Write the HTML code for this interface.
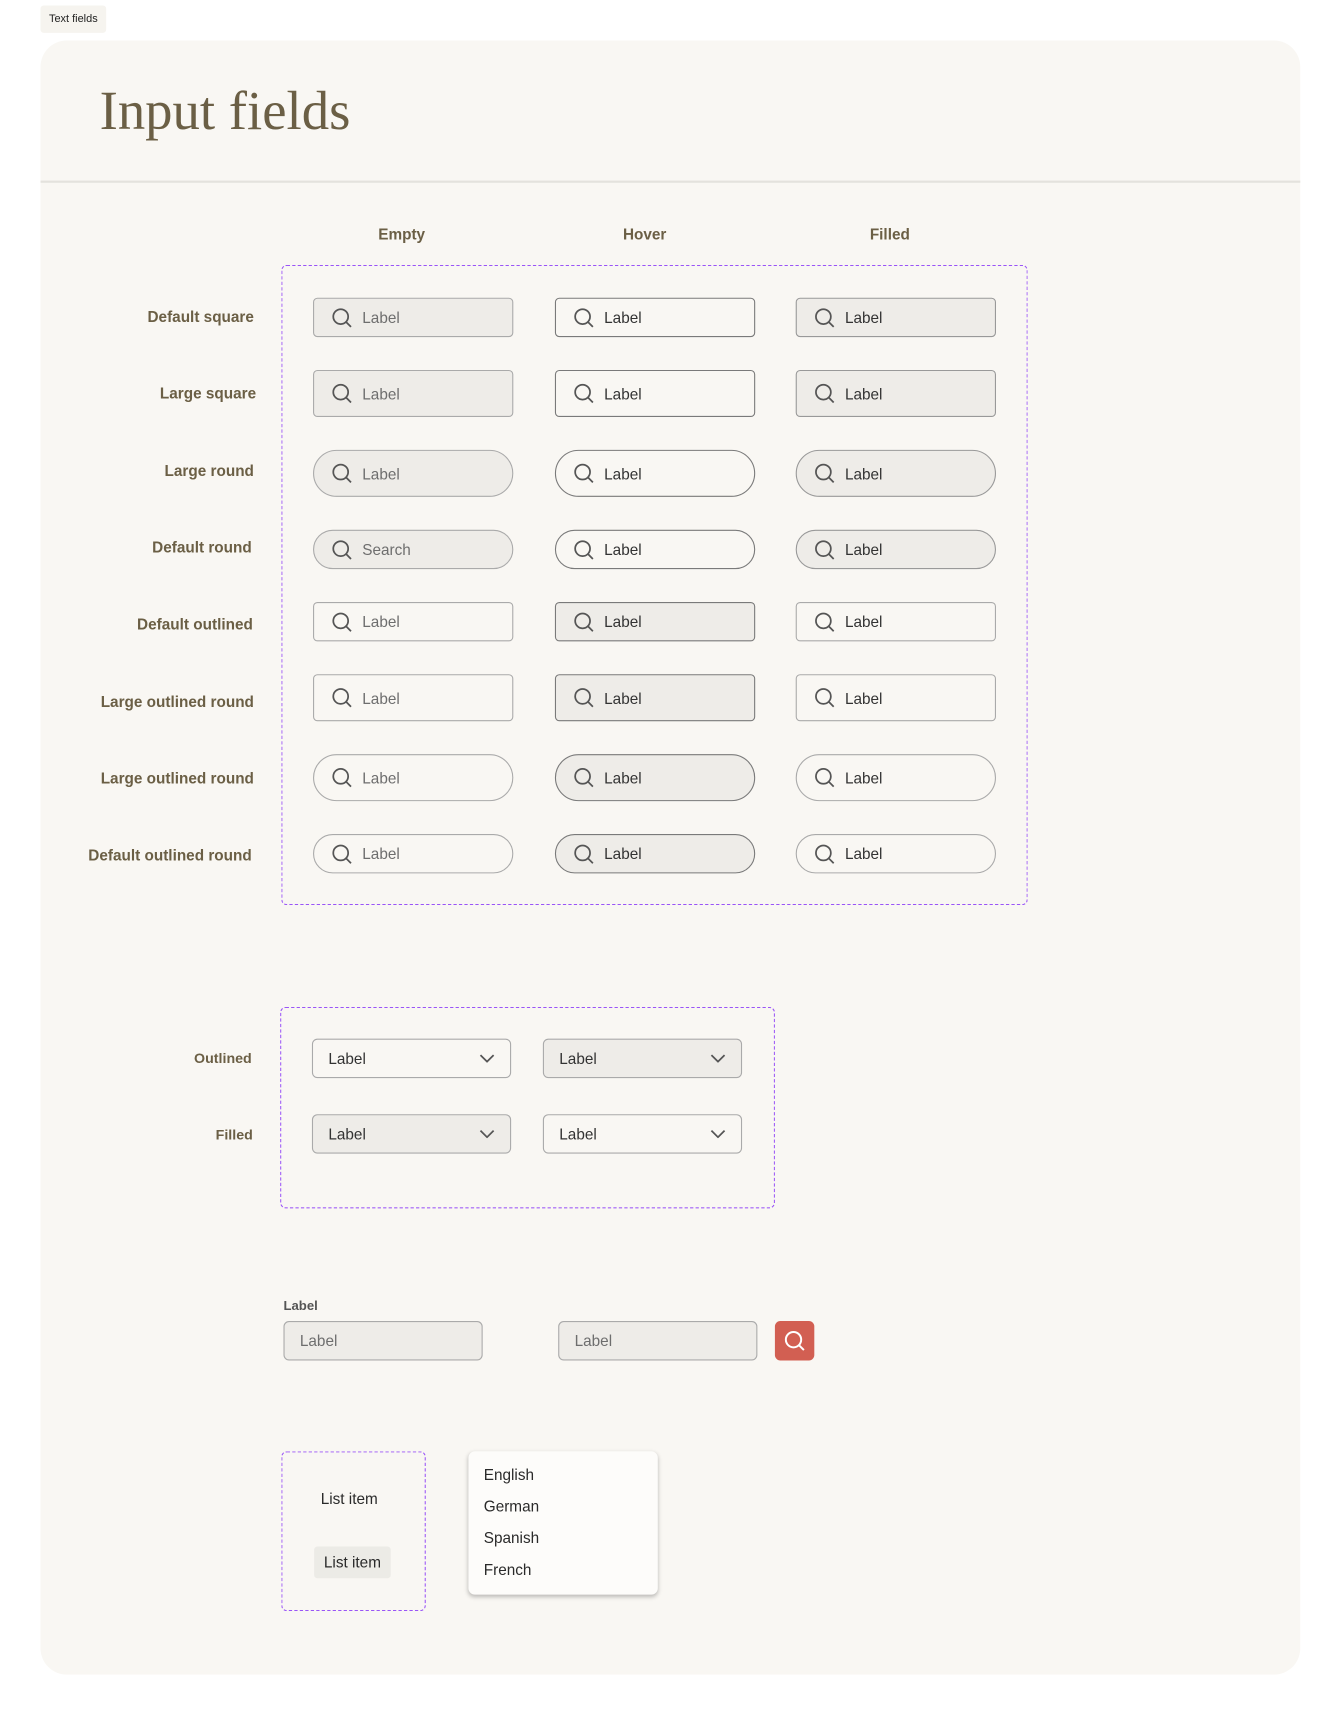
<!DOCTYPE html>
<html><head><meta charset="utf-8"><style>
html,body{margin:0;padding:0;background:#fff;width:1341px;height:1715px;overflow:hidden}
#w{position:absolute;left:0;top:0;width:1226px;height:1567px;transform:scale(1.0945);transform-origin:0 0;font-family:"Liberation Sans",sans-serif}
.a{position:absolute}
.tag{left:37px;top:5px;width:60px;height:25px;background:#f6f4ef;font-size:10px;line-height:25px;text-align:center;color:#222;border-radius:3px}
.card{left:37px;top:37px;width:1151px;height:1493px;background:#f9f7f3;border-radius:24px}
h1{position:absolute;left:91px;top:72px;margin:0;font-family:"Liberation Serif",serif;font-weight:normal;font-size:50px;color:#6b5f45;letter-spacing:0px}
.div{left:37px;top:165px;width:1151px;height:2px;background:#e4e2dd}
.ch{font-size:14px;font-weight:bold;color:#6b5f45;width:120px;text-align:center;top:206px}
.rl{font-size:14px;font-weight:bold;color:#6b5f45;width:200px;text-align:right;left:32px}
.box{border:1.6px dashed #9a55f7;border-radius:5px;box-sizing:border-box}
.in{box-sizing:border-box;border:1px solid #aaa;width:183px;display:flex;align-items:center;font-size:14px;color:#333}
.in svg{margin-left:16px;margin-right:9px;flex:none}
.f{background:#eeece8}
.d{border-color:#7a7a7a}
.m{border-color:#999}
.e{color:#6e6e6e}
.sel{box-sizing:border-box;border:1px solid #aaa;width:182px;height:36px;border-radius:5px;display:flex;align-items:center;justify-content:space-between;padding:0 14px;font-size:14px;color:#333}
.menu div{position:absolute;left:14px;font-size:14px;color:#2a2a2a}
</style></head><body><div id="w">
<div class="a tag">Text fields</div>
<div class="a card"></div>
<h1>Input fields</h1>
<div class="a div"></div>
<div class="a ch" style="left:307px">Empty</div>
<div class="a ch" style="left:529px">Hover</div>
<div class="a ch" style="left:753px">Filled</div>
<div class="a box" style="left:257px;top:242px;width:682px;height:585px"></div>

<div class="a rl" style="top:281px">Default square</div>
<div class="a rl" style="top:351px;left:34px">Large square</div>
<div class="a rl" style="top:422px">Large round</div>
<div class="a rl" style="top:492px;left:30px">Default round</div>
<div class="a rl" style="top:562px;left:31px">Default outlined</div>
<div class="a rl" style="top:633px">Large outlined round</div>
<div class="a rl" style="top:703px">Large outlined round</div>
<div class="a rl" style="top:773px;left:30px">Default outlined round</div>

<div id="grid"></div>

<div class="a box" style="left:256px;top:920px;width:452px;height:184px"></div>
<div class="a rl" style="top:959px;left:30px;font-size:13px">Outlined</div>
<div class="a rl" style="top:1029px;left:31px;font-size:13px">Filled</div>
<div class="a sel" style="left:285px;top:949px">Label<svg width="14" height="8" viewBox="0 0 14 8"><path d="M1 1l6 6 6-6" fill="none" stroke="#555" stroke-width="1.6"/></svg></div>
<div class="a sel f d" style="left:496px;top:949px">Label<svg width="14" height="8" viewBox="0 0 14 8"><path d="M1 1l6 6 6-6" fill="none" stroke="#555" stroke-width="1.6"/></svg></div>
<div class="a sel f" style="left:285px;top:1018px">Label<svg width="14" height="8" viewBox="0 0 14 8"><path d="M1 1l6 6 6-6" fill="none" stroke="#555" stroke-width="1.6"/></svg></div>
<div class="a sel d" style="left:496px;top:1018px">Label<svg width="14" height="8" viewBox="0 0 14 8"><path d="M1 1l6 6 6-6" fill="none" stroke="#555" stroke-width="1.6"/></svg></div>

<div class="a" style="left:259px;top:1186px;font-size:12px;font-weight:bold;color:#555">Label</div>
<div class="a sel f" style="left:259px;top:1207px;color:#6e6e6e">Label</div>
<div class="a sel f" style="left:510px;top:1207px;color:#6e6e6e">Label</div>
<div class="a" style="left:708px;top:1207px;width:36px;height:36px;background:#d25f52;border-radius:5px;display:flex;align-items:center;justify-content:center"><svg width="20" height="20" viewBox="0 0 20 20"><circle cx="9" cy="9" r="7" fill="none" stroke="#fff" stroke-width="1.8"/><path d="M14 14l4.5 4.5" stroke="#fff" stroke-width="1.8"/></svg></div>

<div class="a box" style="left:257px;top:1326px;width:132px;height:146px"></div>
<div class="a" style="left:293px;top:1361px;font-size:14px;color:#2a2a2a">List item</div>
<div class="a" style="left:287px;top:1413px;width:70px;height:29px;background:#ecebe6;border-radius:3px;font-size:14px;color:#2a2a2a;line-height:29px;text-align:center">List item</div>
<div class="a menu" style="left:428px;top:1326px;width:173px;height:131px;background:#fdfcfa;border-radius:6px;box-shadow:0 2px 4px rgba(0,0,0,.25)">
<div style="top:13px">English</div><div style="top:42px">German</div><div style="top:71px">Spanish</div><div style="top:100px">French</div></div>
</div>
<script>
var rows=[[272,36,4],[338,43,4],[411,43,22],[484,36,18],[550,36,4],[616,43,4],[689,43,22],[762,36,18]];
var cols=[286,507,727];
var ic='<svg width="19" height="19" viewBox="0 0 19 19"><circle cx="8.3" cy="8.3" r="6.8" fill="none" stroke="#555" stroke-width="1.6"/><path d="M13.2 13.2l4.5 4.5" stroke="#555" stroke-width="1.6"/></svg>';
var h='';
rows.forEach(function(r,i){cols.forEach(function(c,j){
 var cls='in',txt='Label';
 if(i<4){ if(j==0)cls+=' f e'; if(j==1)cls+=' d'; if(j==2)cls+=' f m'; }
 else { if(j==0)cls+=' e'; if(j==1)cls+=' f d'; }
 if(i==3&&j==0)txt='Search';
 h+='<div class="a '+cls+'" style="left:'+c+'px;top:'+r[0]+'px;height:'+r[1]+'px;border-radius:'+r[2]+'px">'+ic+txt+'</div>';
});});
document.getElementById('grid').outerHTML=h;
</script>
</body></html>
